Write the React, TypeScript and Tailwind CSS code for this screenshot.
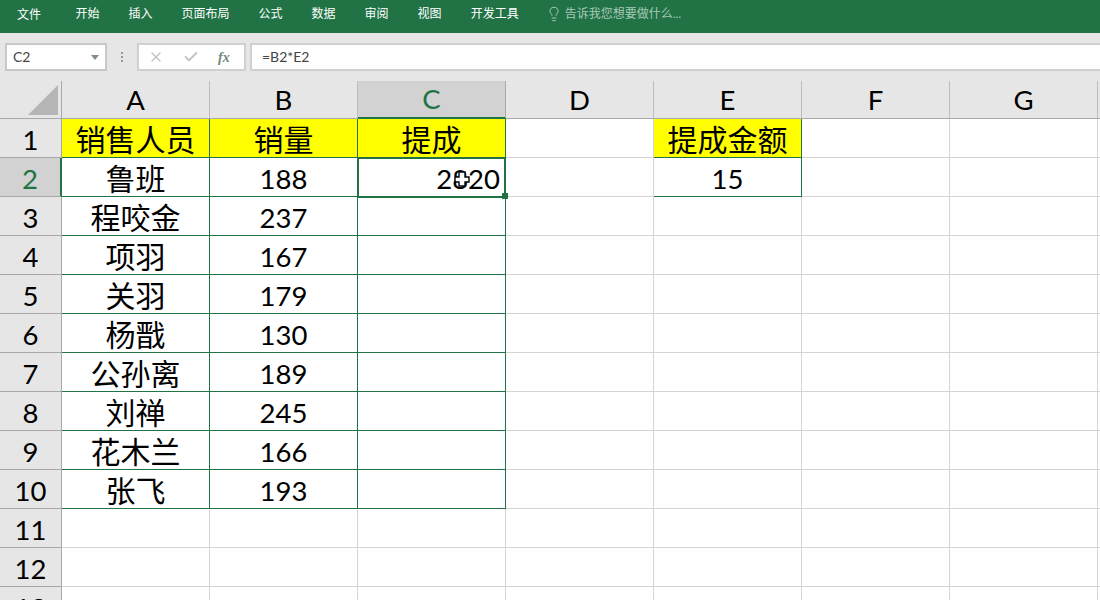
import { Check, Lightbulb, X } from 'lucide-react';

const tabs = ['开始', '插入', '页面布局', '公式', '数据', '审阅', '视图', '开发工具'];
// the last column only peeks in at the right edge, its letter is off screen
const columns = ['A', 'B', 'C', 'D', 'E', 'F', 'G', ''];

const people: Array<[string, string]> = [
  ['鲁班', '188'],
  ['程咬金', '237'],
  ['项羽', '167'],
  ['关羽', '179'],
  ['杨戬', '130'],
  ['公孙离', '189'],
  ['刘禅', '245'],
  ['花木兰', '166'],
  ['张飞', '193'],
];

const font = "font-['Lato','Noto_Sans_CJK_SC',sans-serif]";

function Cell({ children, green, yellow, right, zh }: { children?: React.ReactNode; green?: boolean; yellow?: boolean; right?: boolean; zh?: boolean }) {
  return (
    <div
      className={`flex h-[39px] items-center overflow-visible border-r border-b text-black ${
        zh ? 'pt-[3px] text-[30px]' : 'pt-[4px] text-[27.5px]'
      } ${right ? 'justify-end pr-[5px]' : 'justify-center'} ${green ? 'border-[#217346]' : 'border-[#d4d4d4]'} ${
        yellow ? 'bg-[#ffff00]' : 'bg-white'
      }`}
    >
      {children}
    </div>
  );
}

function Row({ n, selected, children }: { n: number; selected?: boolean; children: React.ReactNode }) {
  return (
    <>
      <div
        className={`flex h-[39px] items-center justify-center border-b border-b-[#a8a8a8] pt-[4px] text-[27.5px] ${
          selected
            ? 'border-r-2 border-r-[#217346] bg-[#d2d2d2] text-[#217346]'
            : 'border-r border-r-[#a8a8a8] bg-[#e6e6e6] text-black'
        }`}
      >
        {n}
      </div>
      {children}
    </>
  );
}

function MoveCursor() {
  return (
    <svg className="absolute left-[453px] top-[50px]" width="18" height="20" viewBox="0 0 18 20">
      <path
        d="M6 3h6v5h4v5h-4v4H6v-4H2V8h4z"
        fill="white"
        stroke="black"
        strokeWidth="1.4"
      />
    </svg>
  );
}

export default function App() {
  return (
    <div className={`h-[600px] w-[1100px] overflow-hidden bg-white ${font}`}>
      {/* Ribbon tabs */}
      <div className="flex h-[33px] items-center bg-[#217346] pb-[6px] text-[12px] text-white">
        <span className="ml-[17px] mr-[34.5px] mt-[2px]">文件</span>
        <div className="flex gap-[29px]">
          {tabs.map((tab) => (
            <span key={tab}>{tab}</span>
          ))}
        </div>
        <Lightbulb className="ml-[27px] h-[16px] w-[16px] text-[#a9c9b8]" strokeWidth={1.5} />
        <span className="ml-[3px] text-[#a9c9b8]">告诉我您想要做什么...</span>
      </div>

      {/* Formula bar */}
      <div className="flex h-[48px] gap-[4px] bg-[#e6e6e6] pt-[10px]">
        <div className="ml-[5px] flex h-[28px] w-[102px] items-center justify-between border-2 border-[#c8c8c8] bg-white pb-[2px] pl-[6px] pr-[6px] text-[14px] text-[#444]">
          C2
          <span className="mt-[2px] h-0 w-0 border-x-[4px] border-t-[5px] border-x-transparent border-t-[#7f8f88]" />
        </div>
        <div className="mx-[8px] flex h-[28px] w-[6px] flex-col items-center justify-center gap-[2px]">
          <span className="h-[2px] w-[2px] bg-[#999]" />
          <span className="h-[2px] w-[2px] bg-[#999]" />
          <span className="h-[2px] w-[2px] bg-[#999]" />
        </div>
        <div className="flex h-[28px] w-[109px] items-center border-2 border-[#d0d0d0] bg-white">
          <X className="ml-[9px] h-[16px] w-[16px] text-[#c4c4c4]" strokeWidth={2} />
          <Check className="ml-[19px] h-[16px] w-[16px] text-[#c4c4c4]" strokeWidth={3} />
          <span className="ml-[19px] font-['Liberation_Serif',serif] text-[14px] font-bold italic text-[#6f8a7d]">fx</span>
        </div>
        <div className="flex h-[28px] flex-1 items-center border-2 border-r-0 border-[#d0d0d0] bg-white pb-[2px] pl-[10px] text-[14px] text-[#444]">
          =B2*E2
        </div>
      </div>

      {/* Column headers */}
      <div className="grid h-[38px] grid-cols-[62px_repeat(8,148px)] grid-rows-[38px] bg-[#e6e6e6] text-[27.5px] leading-none text-black">
        <div className="relative border-r border-b border-[#a8a8a8]">
          <span className="absolute bottom-[3px] right-[3px] h-0 w-0 border-b-[30px] border-l-[30px] border-b-[#b5b5b5] border-l-transparent" />
        </div>
        {columns.map((c) => (
          <div
            key={c}
            className={`flex items-center justify-center ${
              c === 'C'
                ? 'border-r border-b-2 border-r-[#a8a8a8] border-b-[#217346] bg-[#d2d2d2] text-[#217346]'
                : 'border-r border-b border-r-[#bdbdbd] border-b-[#a8a8a8]'
            }`}
          >
            {c}
          </div>
        ))}
      </div>

      {/* Sheet */}
      <div className="relative grid grid-cols-[62px_repeat(8,148px)]">
        <Row n={1}>
          <Cell green yellow zh>销售人员</Cell>
          <Cell green yellow zh>销量</Cell>
          <Cell green yellow zh>提成</Cell>
          <Cell />
          <Cell green yellow zh>提成金额</Cell>
          <Cell />
          <Cell />
          <Cell />
        </Row>
        {people.map(([name, sales], i) => (
          <Row key={name} n={i + 2} selected={i === 0}>
            <Cell green zh>{name}</Cell>
            <Cell green>{sales}</Cell>
            <Cell green right>{i === 0 ? '2820' : ''}</Cell>
            <Cell />
            {i === 0 ? <Cell green>15</Cell> : <Cell />}
            <Cell />
            <Cell />
            <Cell />
          </Row>
        ))}
        {[11, 12, 13].map((n) => (
          <Row key={n} n={n}>
            <Cell />
            <Cell />
            <Cell />
            <Cell />
            <Cell />
            <Cell />
            <Cell />
            <Cell />
          </Row>
        ))}

        {/* Selected cell C2 */}
        <div className="pointer-events-none absolute left-[357px] top-[38px] h-[41px] w-[149px] border-2 border-[#217346]">
          <span className="absolute -bottom-[3px] -right-[4px] h-[6px] w-[6px] bg-[#217346]" />
        </div>
        <MoveCursor />
      </div>
    </div>
  );
}
